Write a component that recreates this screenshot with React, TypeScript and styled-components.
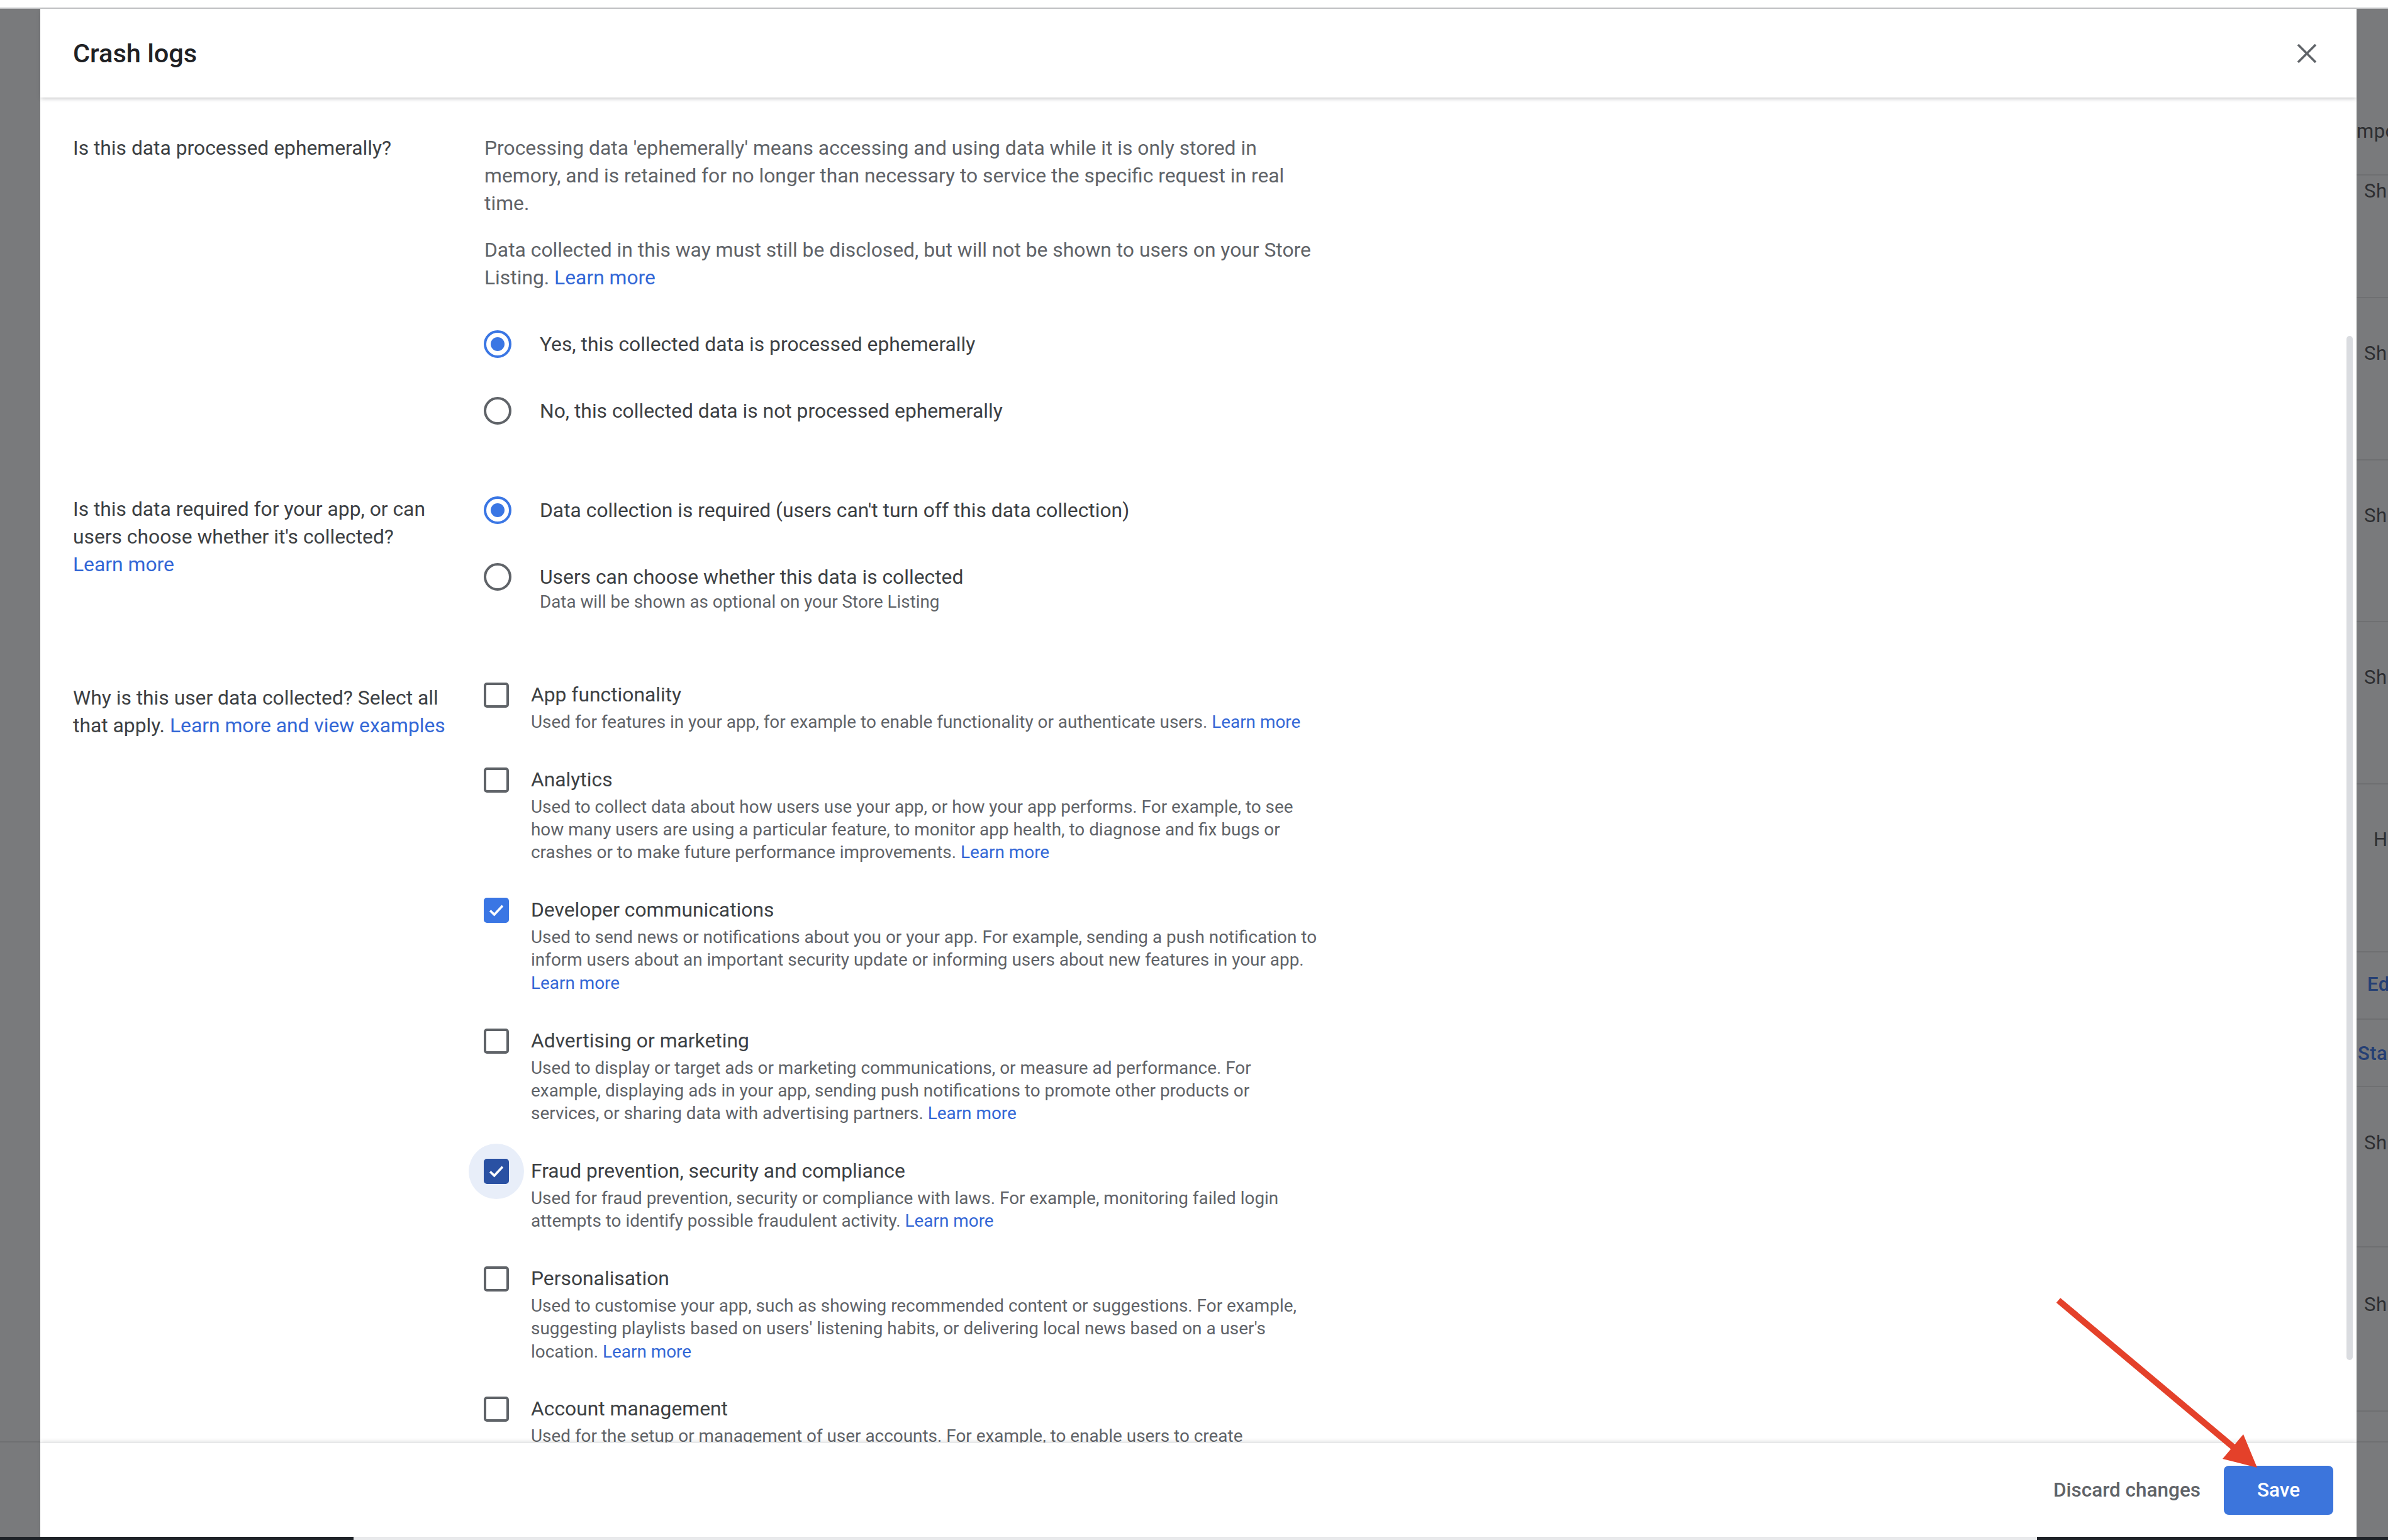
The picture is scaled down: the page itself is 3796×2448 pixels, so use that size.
import React from "react";
import styled, { createGlobalStyle } from "styled-components";

const GlobalStyle = createGlobalStyle`
  html, body {
    margin: 0;
    padding: 0;
  }
  body {
    width: 3796px;
    height: 2448px;
    overflow: hidden;
    background: #fff;
    font-family: Roboto, "Liberation Sans", Arial, sans-serif;
  }
`;

// data for the dimmed page that peeks out on the right of the dialog
const RIGHT_ROWS = [
  { h: 265, pt: 173, pl: 0, text: "mpo" },
  { h: 195, pt: 3, pl: 12, text: "Sh" },
  { h: 258, pt: 66, pl: 12, text: "Sh" },
  { h: 257, pt: 66, pl: 12, text: "Sh" },
  { h: 258, pt: 66, pl: 12, text: "Sh" },
  { h: 267, pt: 66, pl: 27, text: "Hi" },
  { h: 107, pt: 29, pl: 17, text: "Ed", blue: true },
  { h: 107, pt: 32, pl: 2, text: "Sta", blue: true },
  { h: 255, pt: 67, pl: 12, text: "Sh" },
  { h: 261, pt: 69, pl: 12, text: "Sh" },
  { h: 49, pt: 0, pl: 0, text: "" },
];

type CheckItem = {
  title: string;
  lines: string[];
  checked?: boolean;
  focused?: boolean;
};

const CHECK_ITEMS: CheckItem[] = [
  {
    title: "App functionality",
    lines: [
      "Used for features in your app, for example to enable functionality or authenticate users.",
    ],
  },
  {
    title: "Analytics",
    lines: [
      "Used to collect data about how users use your app, or how your app performs. For example, to see",
      "how many users are using a particular feature, to monitor app health, to diagnose and fix bugs or",
      "crashes or to make future performance improvements.",
    ],
  },
  {
    title: "Developer communications",
    checked: true,
    lines: [
      "Used to send news or notifications about you or your app. For example, sending a push notification to",
      "inform users about an important security update or informing users about new features in your app.",
      "",
    ],
  },
  {
    title: "Advertising or marketing",
    lines: [
      "Used to display or target ads or marketing communications, or measure ad performance. For",
      "example, displaying ads in your app, sending push notifications to promote other products or",
      "services, or sharing data with advertising partners.",
    ],
  },
  {
    title: "Fraud prevention, security and compliance",
    checked: true,
    focused: true,
    lines: [
      "Used for fraud prevention, security or compliance with laws. For example, monitoring failed login",
      "attempts to identify possible fraudulent activity.",
    ],
  },
  {
    title: "Personalisation",
    lines: [
      "Used to customise your app, such as showing recommended content or suggestions. For example,",
      "suggesting playlists based on users' listening habits, or delivering local news based on a user's",
      "location.",
    ],
  },
  {
    title: "Account management",
    lines: [
      "Used for the setup or management of user accounts. For example, to enable users to create",
      "accounts or log in to your app.",
    ],
  },
];

export default function App() {
  return (
    <>
      <GlobalStyle />
      <Root>
        <TopStrip />
        <Stage>
          <Shade $w={64}>
            <ShadeRow $h={2279} $pt={0} $pl={0} />
          </Shade>

          <Dialog>
            <Header>
              <Title>Crash logs</Title>
              <CloseButton aria-label="Close">
                <svg width="32" height="32" viewBox="0 0 32 32">
                  <path
                    d="M2 2 L30 30 M30 2 L2 30"
                    stroke="#5f6368"
                    strokeWidth="3.6"
                    fill="none"
                  />
                </svg>
              </CloseButton>
            </Header>

            <Body>
              {/* ephemeral processing */}
              <Section>
                <Question $pt={0}>Is this data processed ephemerally?</Question>
                <Answer>
                  <Paragraph>
                    <Line>
                      Processing data 'ephemerally' means accessing and using data while it is only stored in
                    </Line>
                    <Line>
                      memory, and is retained for no longer than necessary to service the specific request in real
                    </Line>
                    <Line>time.</Line>
                  </Paragraph>
                  <Paragraph $mt={30}>
                    <Line>
                      Data collected in this way must still be disclosed, but will not be shown to users on your Store
                    </Line>
                    <Line>
                      Listing. <Link>Learn more</Link>
                    </Line>
                  </Paragraph>
                  <RadioGroup $mt={31}>
                    <Radio checked label="Yes, this collected data is processed ephemerally" />
                    <Radio label="No, this collected data is not processed ephemerally" />
                  </RadioGroup>
                </Answer>
              </Section>

              {/* required or optional */}
              <Section>
                <Question $pt={29}>
                  <Line>Is this data required for your app, or can</Line>
                  <Line>users choose whether it's collected?</Line>
                  <Line>
                    <Link>Learn more</Link>
                  </Line>
                </Question>
                <Answer>
                  <RadioGroup>
                    <Radio
                      checked
                      label="Data collection is required (users can't turn off this data collection)"
                    />
                    <Radio
                      label="Users can choose whether this data is collected"
                      hint="Data will be shown as optional on your Store Listing"
                    />
                  </RadioGroup>
                </Answer>
              </Section>

              {/* purposes */}
              <Section>
                <Question $pt={29}>
                  <Line>Why is this user data collected? Select all</Line>
                  <Line>
                    that apply. <Link>Learn more and view examples</Link>
                  </Line>
                </Question>
                <Answer>
                  <CheckList>
                    {CHECK_ITEMS.map((item) => (
                      <CheckRow key={item.title}>
                        <CheckSlot $focused={!!item.focused}>
                          <CheckBox $checked={!!item.checked} $focused={!!item.focused}>
                            {item.checked && (
                              <svg width="32" height="32" viewBox="0 0 24 24">
                                <path
                                  d="M4.6 12.4 L9.5 17.2 L19.4 6.6"
                                  stroke="#fff"
                                  strokeWidth="2.8"
                                  fill="none"
                                />
                              </svg>
                            )}
                          </CheckBox>
                        </CheckSlot>
                        <CheckText>
                          <OptionLabel>{item.title}</OptionLabel>
                          <Description>
                            {item.lines.map((line, i) => (
                              <SmallLine key={i}>
                                {line}
                                {i === item.lines.length - 1 && (
                                  <>
                                    {line ? " " : ""}
                                    <Link>Learn more</Link>
                                  </>
                                )}
                              </SmallLine>
                            ))}
                          </Description>
                        </CheckText>
                      </CheckRow>
                    ))}
                  </CheckList>
                </Answer>
              </Section>

              <ScrollThumb />
            </Body>

            <Footer>
              <DiscardButton>Discard changes</DiscardButton>
              <SaveButton>Save</SaveButton>
            </Footer>
          </Dialog>

          <Shade $w={50}>
            {RIGHT_ROWS.map((r, i) => (
              <ShadeRow key={i} $h={r.h} $pt={r.pt} $pl={r.pl} $blue={r.blue}>
                {r.text}
              </ShadeRow>
            ))}
          </Shade>
        </Stage>
        <BottomStrip>
          <Dock $dark $w={562} />
          <Dock $w={2676} />
          <Dock $dark $w={558} />
        </BottomStrip>

        {/* red annotation arrow */}
        <Annotation viewBox="0 0 3796 2448" width="3796" height="2448">
          <line x1="3272" y1="2067" x2="3552" y2="2302" stroke="#e4412a" strokeWidth="10" />
          <polygon points="3588,2333 3533,2319 3566,2280" fill="#e4412a" />
        </Annotation>
      </Root>
    </>
  );
}

const Radio = ({
  label,
  hint,
  checked,
}: {
  label: string;
  hint?: string;
  checked?: boolean;
}) => (
  <RadioRow>
    <RadioCircle $checked={!!checked} />
    <div>
      <OptionLabel>{label}</OptionLabel>
      {hint && <Hint>{hint}</Hint>}
    </div>
  </RadioRow>
);

const Root = styled.div`
  position: relative;
  width: 3796px;
  height: 2448px;
  display: flex;
  flex-direction: column;
  overflow: hidden;
`;

const TopStrip = styled.div`
  flex: none;
  height: 12px;
  background: #fff;
  border-bottom: 2px solid #c2c3c5;
`;

const Stage = styled.div`
  flex: 1;
  min-height: 0;
  display: flex;
`;

const Shade = styled.div<{ $w: number }>`
  flex: none;
  width: ${(p) => p.$w}px;
  background: #797a7c;
  display: flex;
  flex-direction: column;
  overflow: hidden;
`;

const ShadeRow = styled.div<{ $h: number; $pt: number; $pl: number; $blue?: boolean }>`
  flex: none;
  box-sizing: border-box;
  height: ${(p) => p.$h}px;
  padding: ${(p) => p.$pt}px 0 0 ${(p) => p.$pl}px;
  border-bottom: 2px solid #6e6f71;
  white-space: nowrap;
  font-size: 31px;
  line-height: 44px;
  letter-spacing: 0.5px;
  color: ${(p) => (p.$blue ? "#253f74" : "#2d2e31")};
  font-weight: ${(p) => (p.$blue ? 500 : 400)};
`;

const Dialog = styled.div`
  flex: none;
  width: 3682px;
  background: #fff;
  display: flex;
  flex-direction: column;
`;

const Header = styled.div`
  flex: none;
  height: 141px;
  box-sizing: border-box;
  padding: 0 63px 0 52px;
  display: flex;
  align-items: center;
  justify-content: space-between;
  position: relative;
  z-index: 2;
  box-shadow: 0 3px 6px -1px rgba(60, 64, 67, 0.28);
`;

const Title = styled.h1`
  margin: 0;
  font-size: 41.5px;
  font-weight: 500;
  color: #202124;
`;

const CloseButton = styled.button`
  width: 32px;
  height: 32px;
  padding: 0;
  border: none;
  background: none;
  display: flex;
`;

const Body = styled.div`
  flex: 1;
  min-height: 0;
  position: relative;
  overflow: hidden;
  box-sizing: border-box;
  padding: 58px 0 0 52px;
  display: flex;
  flex-direction: column;
  gap: 52px;
`;

const Section = styled.div`
  display: grid;
  grid-template-columns: 654px auto;
  align-items: start;
`;

const Question = styled.div<{ $pt: number }>`
  padding-top: ${(p) => p.$pt}px;
  font-size: 31.8px;
  line-height: 44px;
  color: #3c4043;
  white-space: nowrap;
`;

const Answer = styled.div`
  display: flex;
  flex-direction: column;
`;

const Paragraph = styled.div<{ $mt?: number }>`
  margin-top: ${(p) => p.$mt ?? 0}px;
  font-size: 31.8px;
  line-height: 44px;
  color: #5f6368;
`;

const Line = styled.span`
  display: block;
  white-space: nowrap;
`;

const Link = styled.a`
  color: #3367d6;
  text-decoration: none;
  cursor: pointer;
`;

const RadioGroup = styled.div<{ $mt?: number }>`
  margin-top: ${(p) => p.$mt ?? 0}px;
  display: flex;
  flex-direction: column;
`;

const RadioRow = styled.div`
  display: flex;
  align-items: flex-start;
  gap: 45px;
  padding: 31px 0;
`;

const RadioCircle = styled.span<{ $checked: boolean }>`
  flex: none;
  width: 44px;
  height: 44px;
  margin-left: -1px;
  box-sizing: border-box;
  border-radius: 50%;
  border: 4.5px solid ${(p) => (p.$checked ? "#3a76e4" : "#5f6368")};
  display: flex;
  align-items: center;
  justify-content: center;

  &::after {
    content: "";
    display: ${(p) => (p.$checked ? "block" : "none")};
    width: 22px;
    height: 22px;
    border-radius: 50%;
    background: #3a76e4;
  }
`;

const OptionLabel = styled.div`
  font-size: 31.8px;
  line-height: 44px;
  color: #3c4043;
  white-space: nowrap;
`;

const Hint = styled.div`
  font-size: 27.8px;
  line-height: 36px;
  color: #5f6368;
  white-space: nowrap;
`;

const CheckList = styled.div`
  padding-top: 24px;
  display: flex;
  flex-direction: column;
  gap: 50.5px;
`;

const CheckRow = styled.div`
  display: flex;
  align-items: flex-start;
  gap: 35px;
`;

// holds the box and, when focused, the soft round halo behind it
const CheckSlot = styled.span<{ $focused: boolean }>`
  position: relative;
  isolation: isolate;
  flex: none;
  width: 40px;
  height: 40px;
  margin: 3px 0 0 -1px;

  &::before {
    content: "";
    display: ${(p) => (p.$focused ? "block" : "none")};
    position: absolute;
    left: -24px;
    top: -24px;
    width: 88px;
    height: 88px;
    border-radius: 50%;
    background: #e8eef9;
    z-index: -1;
  }
`;

const CheckBox = styled.span<{ $checked: boolean; $focused: boolean }>`
  position: relative;
  width: 40px;
  height: 40px;
  box-sizing: border-box;
  border-radius: 5px;
  border: 4.5px solid
    ${(p) => (p.$focused ? "#2a51a3" : p.$checked ? "#3a76e4" : "#5f6368")};
  background: ${(p) => (p.$focused ? "#2a51a3" : p.$checked ? "#3a76e4" : "#fff")};
  display: flex;
  align-items: center;
  justify-content: center;
`;

const CheckText = styled.div`
  display: flex;
  flex-direction: column;
`;

const Description = styled.div`
  margin-top: 4px;
  font-size: 27.9px;
  line-height: 36.3px;
  color: #5f6368;
`;

const SmallLine = styled.span`
  display: block;
  white-space: nowrap;
`;

const ScrollThumb = styled.div`
  position: absolute;
  right: 6px;
  top: 379px;
  width: 10px;
  height: 1628px;
  border-radius: 5px;
  background: #dadce0;
`;

const Footer = styled.div`
  flex: none;
  height: 150px;
  box-sizing: border-box;
  padding-right: 37px;
  display: flex;
  align-items: center;
  justify-content: flex-end;
  gap: 37px;
  position: relative;
  z-index: 2;
  border-top: 1px solid #e2e3e5;
  box-shadow: 0 -3px 6px -1px rgba(60, 64, 67, 0.14);
  background: #fff;
`;

const DiscardButton = styled.button`
  border: none;
  background: none;
  padding: 0;
  font-family: Roboto, "Liberation Sans", Arial, sans-serif;
  font-size: 31.5px;
  font-weight: 500;
  color: #5f6368;
`;

const SaveButton = styled.button`
  width: 174px;
  height: 78px;
  border: none;
  border-radius: 8px;
  background: #3c75dc;
  color: #fff;
  font-family: Roboto, "Liberation Sans", Arial, sans-serif;
  font-size: 31.5px;
  font-weight: 500;
`;

const BottomStrip = styled.div`
  flex: none;
  height: 5px;
  display: flex;
`;

const Dock = styled.div<{ $dark?: boolean; $w: number }>`
  width: ${(p) => p.$w}px;
  background: ${(p) => (p.$dark ? "#1f2328" : "#e9eaec")};
`;

const Annotation = styled.svg`
  position: absolute;
  left: 0;
  top: 0;
  z-index: 10;
  pointer-events: none;
`;
